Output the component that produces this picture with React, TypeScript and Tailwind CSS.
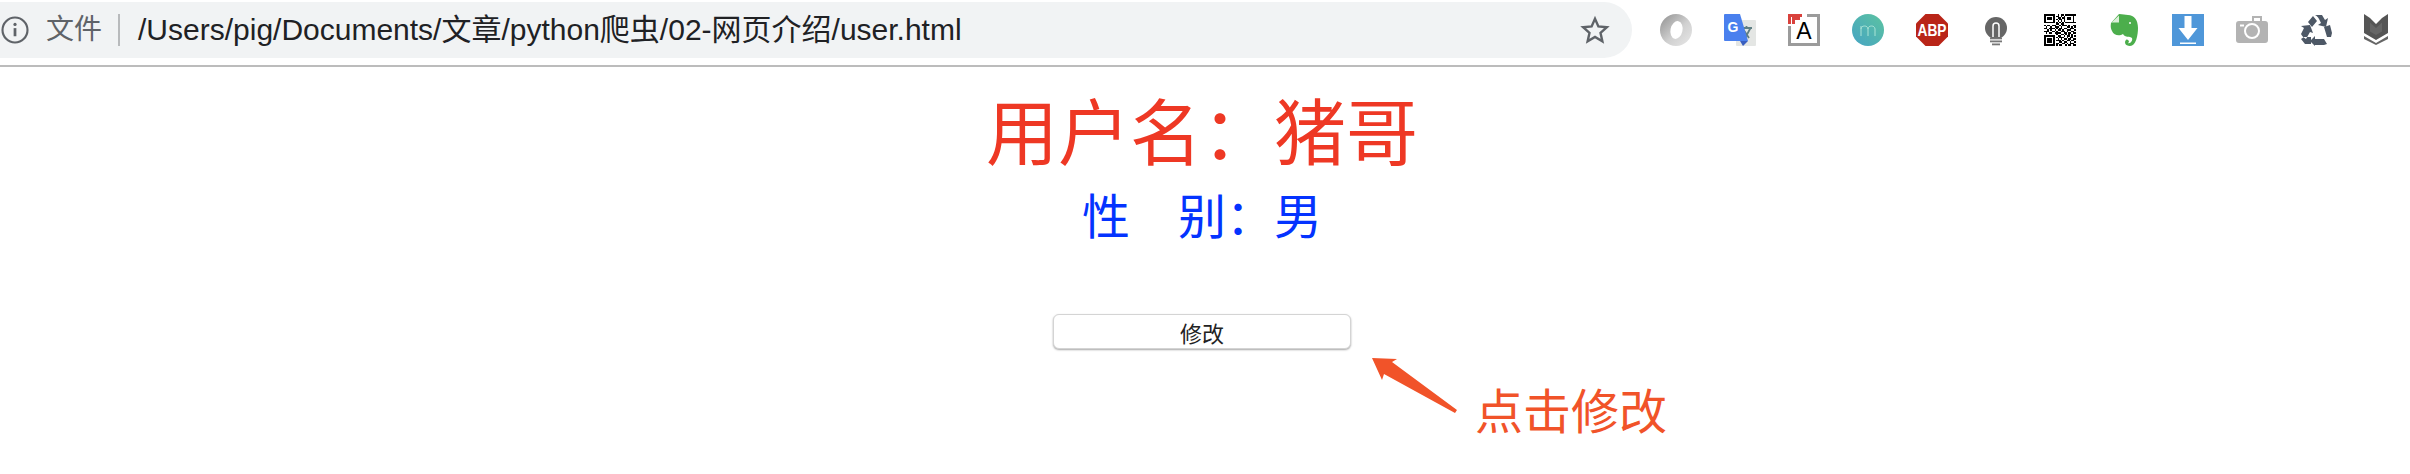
const cjk = "font-['Liberation_Sans','Noto_Sans_CJK_SC',sans-serif]";

function JsonIcon() {
  return (
    <svg width="32" height="32" viewBox="0 0 32 32">
      <defs>
        <linearGradient id="jv" x1="0" y1="0" x2="1" y2="1">
          <stop offset="0" stopColor="#8f8f8f" />
          <stop offset="0.55" stopColor="#d0d0d0" />
          <stop offset="1" stopColor="#e8e8e8" />
        </linearGradient>
      </defs>
      <circle cx="16" cy="16" r="16" fill="url(#jv)" />
      <ellipse cx="16.500" cy="16" rx="6" ry="9" fill="#fff" transform="rotate(12 16.500 16)" />
    </svg>
  );
}

function TranslateIcon() {
  return (
    <svg width="32" height="32" viewBox="0 0 32 32">
      <rect x="12" y="6" width="20" height="26" rx="1" fill="#e4e6e4" />
      <path d="M17 14h11M22.500 12v2M19 15l6 9M26.500 14l-7 13" stroke="#5f7f84" strokeWidth="1.800" fill="none" />
      <path d="M1 0h15l8 27H1a1 1 0 0 1-1-1V1a1 1 0 0 1 1-1z" fill="#4a80ee" />
      <path d="M16 27h8l-5 5z" fill="#3a5fbf" />
      <text x="9" y="18" textAnchor="middle" fontSize="14" fontWeight="700" fill="#fff" fontFamily="Liberation Sans, sans-serif">G</text>
    </svg>
  );
}

function AIcon() {
  return (
    <svg width="32" height="32" viewBox="0 0 32 32">
      <path d="M1.500 12V30.500H30.500V1.500H19" fill="none" stroke="#9b9b9b" strokeWidth="3" />
      <path d="M1.500 10V1.500H14" fill="none" stroke="#d9413c" strokeWidth="3" />
      <path d="M4 3h8v3H7v4H4z" fill="#d9413c" />
      <text x="16" y="25" textAnchor="middle" fontSize="23" fill="#000" fontFamily="Liberation Sans, sans-serif">A</text>
    </svg>
  );
}

function MercuryIcon() {
  return (
    <svg width="32" height="32" viewBox="0 0 32 32">
      <defs>
        <linearGradient id="mg" x1="0" y1="1" x2="1" y2="0">
          <stop offset="0" stopColor="#46a4c4" />
          <stop offset="1" stopColor="#5cc3a0" />
        </linearGradient>
      </defs>
      <circle cx="16" cy="16" r="16" fill="url(#mg)" />
      <path d="M9 22V12M9 15c0-4 7-4 7 0v7M16 15c0-4 7-4 7 0v7" fill="none" stroke="#a9e3d6" strokeWidth="1" />
    </svg>
  );
}

function AbpIcon() {
  return (
    <svg width="32" height="32" viewBox="0 0 32 32">
      <path d="M9.500 0h13L32 9.500v13L22.500 32h-13L0 22.500v-13z" fill="#b92518" />
      <text x="16" y="22" textAnchor="middle" fontSize="17" fontWeight="700" fill="#fff" fontFamily="Liberation Sans, sans-serif" textLength="29" lengthAdjust="spacingAndGlyphs">ABP</text>
    </svg>
  );
}

function BulbIcon() {
  return (
    <svg width="32" height="32" viewBox="0 0 32 32">
      <circle cx="16" cy="14" r="11" fill="#666" />
      <rect x="11" y="18" width="10" height="5" fill="#666" />
      <path d="M13 23V12a3 3 0 0 1 6 0v11" fill="none" stroke="#fff" strokeWidth="1.500" />
      <rect x="10" y="23.500" width="12" height="1.800" fill="#777" />
      <rect x="10" y="26.500" width="12" height="1.800" fill="#777" />
      <rect x="12" y="29.500" width="8" height="1.800" fill="#777" />
    </svg>
  );
}

const qrCells = [
  "111111100101101111111",
  "100000101101010000010",
  "101110100110110111010",
  "101110101011010111010",
  "100000100101010000010",
  "111111101010101111111",
  "000000001101100000000",
  "101101110010111010011",
  "010010011101000110101",
  "110111101011011001110",
  "001010010110100111001",
  "111001101001110100110",
  "010110011110011011011",
  "000000001001101010100",
  "111111100110010110101",
  "100000101011100101100",
  "101110100101011011011",
  "101110101110100110110",
  "101110100011011001001",
  "100000101100110101110",
  "111111101011001011011",
];

function QrIcon() {
  return (
    <svg width="32" height="32" viewBox="0 0 21 21" shapeRendering="crispEdges">
      {qrCells.map((row, y) =>
        row.split('').map((c, x) => (c === '1' ? <rect key={`${x}-${y}`} x={x} y={y} width="1" height="1" fill="#000" /> : null))
      )}
    </svg>
  );
}

function EvernoteIcon() {
  return (
    <svg width="32" height="32" viewBox="0 0 32 32">
      <path d="M11 0C15 0 17 1 20 1C26 1 30 6 30 14C30 21 28 32 22 32C17 32 16 28 18 26C19 25 21 26 21 28L20 29C22 30 25 27 24 24C22 22 17 24 15 20C12 22 6 22 4 17C2 13 3 10 3 9z" fill="#4cae4c" />
      <path d="M11 1.500V8.500H3.500z" fill="#dcefd9" />
      <circle cx="22" cy="9" r="1" fill="#fff" />
    </svg>
  );
}

function DownloadIcon() {
  return (
    <svg width="32" height="32" viewBox="0 0 32 32">
      <rect width="32" height="32" fill="#4f97d9" />
      <path d="M12.500 2h7v12h6L16 26 6.500 14h6z" fill="#fff" />
      <rect x="8" y="28.500" width="16" height="1.500" fill="#fff" />
    </svg>
  );
}

function CameraIcon() {
  return (
    <svg width="32" height="32" viewBox="0 0 32 32">
      <path d="M16 2h10v5h3a3 3 0 0 1 3 3v16a3 3 0 0 1-3 3H3a3 3 0 0 1-3-3V10a3 3 0 0 1 3-3h13z" fill="#b3b3b3" />
      <circle cx="16" cy="17" r="7" fill="none" stroke="#fff" strokeWidth="2" />
      <rect x="4" y="10.500" width="4" height="2" fill="#fff" />
      <rect x="18" y="4" width="6" height="3" fill="#fff" />
    </svg>
  );
}

function RecycleIcon() {
  return (
    <svg width="32" height="32" viewBox="0 0 32 32" fill="#4d5866">
      <path d="M8 8l5-6 4 5-5 6zM15 1h7l3 5 3-2-2 9-8-2 3-2-2-4c-1-2-2-3-4-4z" />
      <path d="M1 25l4 5h6v-7H4zM1 20l3-6-3-2 9-1 3 8-3-1-4 7c-2-1-4-3-5-5z" />
      <path d="M15 25h9l3 5-3 1H15v1l-5-5 5-5zM24 13l6-2 2 8-1 4h-4z" />
    </svg>
  );
}

function ShieldIcon() {
  return (
    <svg width="24" height="32" viewBox="0 0 24 32" fill="#555">
      <path d="M0 0l6 4 6 6 6-6 6-4v19l-12 7-12-7z" />
      <path d="M6 8.500l6 5.500 6-5.500v9l-6 3.500-6-3.500z" fill="#666" />
      <path d="M0 22l12 7 12-7v3l-12 6-12-6z" fill="#666" />
    </svg>
  );
}

function Toolbar() {
  return (
    <header className="h-[67px] border-b-2 border-[#bcbcbc] flex items-start pt-[2px]">
      <div className="h-[56px] w-[1632px] bg-[#f1f3f4] rounded-r-[28px] flex items-center">
        <svg width="30" height="30" viewBox="0 0 24 24" fill="none" stroke="#5f6368" strokeWidth="1.700" className="shrink-0">
          <circle cx="12" cy="12" r="10" />
          <path d="M12 10.500V17" strokeWidth="2.200" />
          <circle cx="12" cy="7.500" r="1.300" fill="#5f6368" stroke="none" />
        </svg>
        <span className={`${cjk} text-[28px] text-[#5f6368] ml-[16px] leading-[34px]`}>文件</span>
        <span className="w-[2px] h-[32px] bg-[#b8babc] ml-[16px]" />
        <span className={`${cjk} text-[30px] text-[#202124] ml-[18px] leading-[36px] whitespace-nowrap`}>/Users/pig/Documents/文章/python爬虫/02-网页介绍/user.html</span>
        <svg width="30" height="30" viewBox="0 0 24 24" fill="none" stroke="#5f6368" strokeWidth="1.900" className="ml-auto mr-[22px]">
          <path d="M12 3l2.700 6.200 6.800.6-5.100 4.500 1.500 6.700L12 17.500 6.100 21l1.500-6.700L2.500 9.800l6.800-.6z" />
        </svg>
      </div>
      <div className="flex items-center h-[32px] mt-[12px] ml-[28px] gap-[32px]">
        <JsonIcon />
        <TranslateIcon />
        <AIcon />
        <MercuryIcon />
        <AbpIcon />
        <BulbIcon />
        <QrIcon />
        <EvernoteIcon />
        <DownloadIcon />
        <CameraIcon />
        <RecycleIcon />
        <ShieldIcon />
      </div>
    </header>
  );
}

export default function App() {
  return (
    <div className="relative h-[474px] w-[2410px] bg-white overflow-hidden">
      <Toolbar />
      <main className="flex flex-col items-center pr-[6px] font-['Noto_Sans_CJK_SC',sans-serif]">
        <h1 className="text-[72px] leading-[84px] text-[#ee3824] mt-[19px] font-normal">用户名：猪哥</h1>
        <p className="text-[48px] leading-[56px] text-[#0433ff] mt-[15px]">性　别：男</p>
        <button className="w-[298px] h-[35px] mt-[73px] bg-white border border-[#d4d4d4] rounded-[6px] shadow-[0_1px_2px_rgba(0,0,0,0.35)] text-[22px] leading-none text-[#222]">修改</button>
      </main>

      {/* annotation drawn over the page */}
      <svg width="90" height="62" viewBox="0 0 90 62" className="absolute left-[1370px] top-[356px]">
        <path d="M2 2L27 3L22 6L87 54L85 57L14 18L12 24z" fill="#f15329" />
      </svg>
      <span className="absolute left-[1475px] top-[376px] text-[48px] leading-[64px] text-[#f15329] font-['Noto_Sans_CJK_SC',sans-serif] font-normal">点击修改</span>
    </div>
  );
}
